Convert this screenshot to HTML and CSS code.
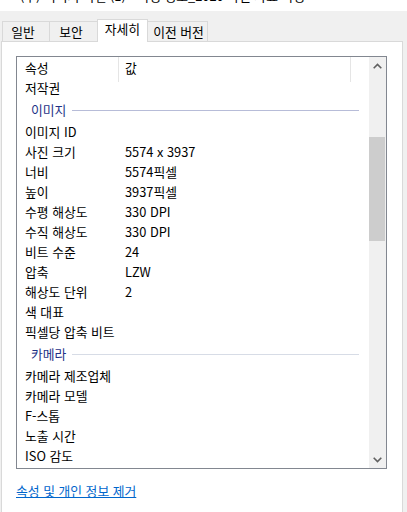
FILE: index.html
```html
<!DOCTYPE html>
<html lang="ko">
<head>
<meta charset="utf-8">
<link rel="stylesheet" href="styles.css">
</head>
<body>
<div class="titlebar"><span class="title-text">(주) 이미지 파일 (1) - 속성 정보_2020 사진 자료 속성</span></div>
<div class="tabs">
  <div class="tab tab-1">일반</div>
  <div class="tab tab-2">보안</div>
  <div class="tab tab-3 selected">자세히</div>
  <div class="tab tab-4">이전 버전</div>
</div>
<div class="panel">
  <div class="listbox">
    <div class="list">
      <div class="header">
        <div class="hcell hname">속성</div>
        <div class="hcell hvalue">값</div>
        <div class="hcell hrest"></div>
      </div>
      <div class="row"><span class="name">저작권</span><span class="value"></span></div>
      <div class="group g1"><span class="gtext">이미지</span><span class="gline"></span></div>
      <div class="row"><span class="name">이미지 ID</span><span class="value"></span></div>
      <div class="row"><span class="name">사진 크기</span><span class="value">5574 x 3937</span></div>
      <div class="row"><span class="name">너비</span><span class="value">5574픽셀</span></div>
      <div class="row"><span class="name">높이</span><span class="value">3937픽셀</span></div>
      <div class="row"><span class="name">수평 해상도</span><span class="value">330 DPI</span></div>
      <div class="row"><span class="name">수직 해상도</span><span class="value">330 DPI</span></div>
      <div class="row"><span class="name">비트 수준</span><span class="value">24</span></div>
      <div class="row"><span class="name">압축</span><span class="value">LZW</span></div>
      <div class="row"><span class="name">해상도 단위</span><span class="value">2</span></div>
      <div class="row"><span class="name">색 대표</span><span class="value"></span></div>
      <div class="row"><span class="name">픽셀당 압축 비트</span><span class="value"></span></div>
      <div class="group g2"><span class="gtext">카메라</span><span class="gline"></span></div>
      <div class="row"><span class="name">카메라 제조업체</span><span class="value"></span></div>
      <div class="row"><span class="name">카메라 모델</span><span class="value"></span></div>
      <div class="row"><span class="name">F-스톱</span><span class="value"></span></div>
      <div class="row"><span class="name">노출 시간</span><span class="value"></span></div>
      <div class="row"><span class="name">ISO 감도</span><span class="value"></span></div>
    </div>
    <div class="scrollbar">
      <div class="sbtn">
        <svg width="9" height="6" viewBox="0 0 9 6"><path d="M0.7 5.2 L4.5 1.4 L8.3 5.2" fill="none" stroke="#606060" stroke-width="1.6"/></svg>
      </div>
      <div class="track"><div class="thumb"></div></div>
      <div class="sbtn">
        <svg width="9" height="6" viewBox="0 0 9 6"><path d="M0.7 0.8 L4.5 4.6 L8.3 0.8" fill="none" stroke="#606060" stroke-width="1.6"/></svg>
      </div>
    </div>
  </div>
  <a class="link" href="#">속성 및 개인 정보 제거</a>
</div>
</body>
</html>
```
FILE: styles.css
```css
* { box-sizing: border-box; }
html, body { margin: 0; padding: 0; }
body {
  background: #f0f0f0;
  font-family: "Noto Sans CJK KR", "Noto Sans", sans-serif;
  font-size: 12.8px;
  color: #000;
  width: 407px;
  height: 512px;
  overflow: hidden;
}
.titlebar {
  height: 11px;
  background: #fff;
  overflow: hidden;
  padding-left: 20px;
}
.title-text {
  display: block;
  margin-top: -12px;
  line-height: 16px;
  white-space: nowrap;
}
.tabs {
  display: flex;
  align-items: flex-end;
  height: 31px;
  padding-left: 2px;
}
.tab {
  height: 21px;
  border: 1px solid #d9d9d9;
  border-bottom: none;
  background: #f0f0f0;
  padding-top: 2px;
  line-height: 16px;
  text-align: center;
  white-space: nowrap;
}
.tab-1 { width: 48px; padding-right: 6px; }
.tab-2 { width: 49px; margin-left: -1px; padding-right: 5px; }
.tab-3 { width: 51px; margin-left: -1px; }
.tab-4 { width: 61px; margin-left: -1px; padding-left: 2px; }
.tab.selected {
  height: 23px;
  background: #fff;
  position: relative;
  z-index: 2;
  padding-top: 1px;
}
.panel {
  position: relative;
  z-index: 1;
  margin-top: -1px;
  margin-left: 1px;
  width: 402px;
  height: 480px;
  background: #fff;
  border: 1px solid #d9d9d9;
  padding: 14px 0 0 14px;
}
.listbox {
  display: flex;
  width: 371px;
  height: 413px;
  border: 1px solid #828790;
  background: #fff;
  overflow: hidden;
}
.list {
  flex: 1;
  min-width: 0;
}
.header {
  display: flex;
  height: 21px;
}
.hcell {
  height: 25px;
  line-height: 22px;
  flex: none;
}
.hname { width: 102px; padding-left: 8px; border-right: 1px solid #e5e5e5; }
.hvalue { width: 232px; padding-left: 6px; border-right: 1px solid #e5e5e5; }
.hrest { flex: 1; }
.row {
  display: flex;
  height: 20px;
  line-height: 20px;
  white-space: nowrap;
}
.name { width: 108px; padding-left: 8px; flex: none; }
.value { flex: 1; }
.group {
  display: flex;
  align-items: center;
  height: 24px;
  padding-left: 14px;
  padding-right: 10px;
}
.gtext { color: #1e3287; line-height: 24px; }
.gline { flex: 1; height: 1px; margin-left: 6px; }
.g1 .gline { background: #b7bcd8; }
.g2 .gline { background: #d7dce6; }
.scrollbar {
  width: 17px;
  flex: none;
  background: #f0f0f0;
  display: flex;
  flex-direction: column;
}
.sbtn {
  height: 17px;
  display: flex;
  align-items: center;
  justify-content: center;
  padding-right: 1px;
}
.track { flex: 1; }
.thumb {
  margin-top: 63px;
  width: 16px;
  height: 104px;
  background: #cdcdcd;
}
.link {
  display: inline-block;
  margin-top: 14px;
  margin-left: 0;
  color: #0066cc;
  text-decoration: underline;
  line-height: 16px;
}
```
